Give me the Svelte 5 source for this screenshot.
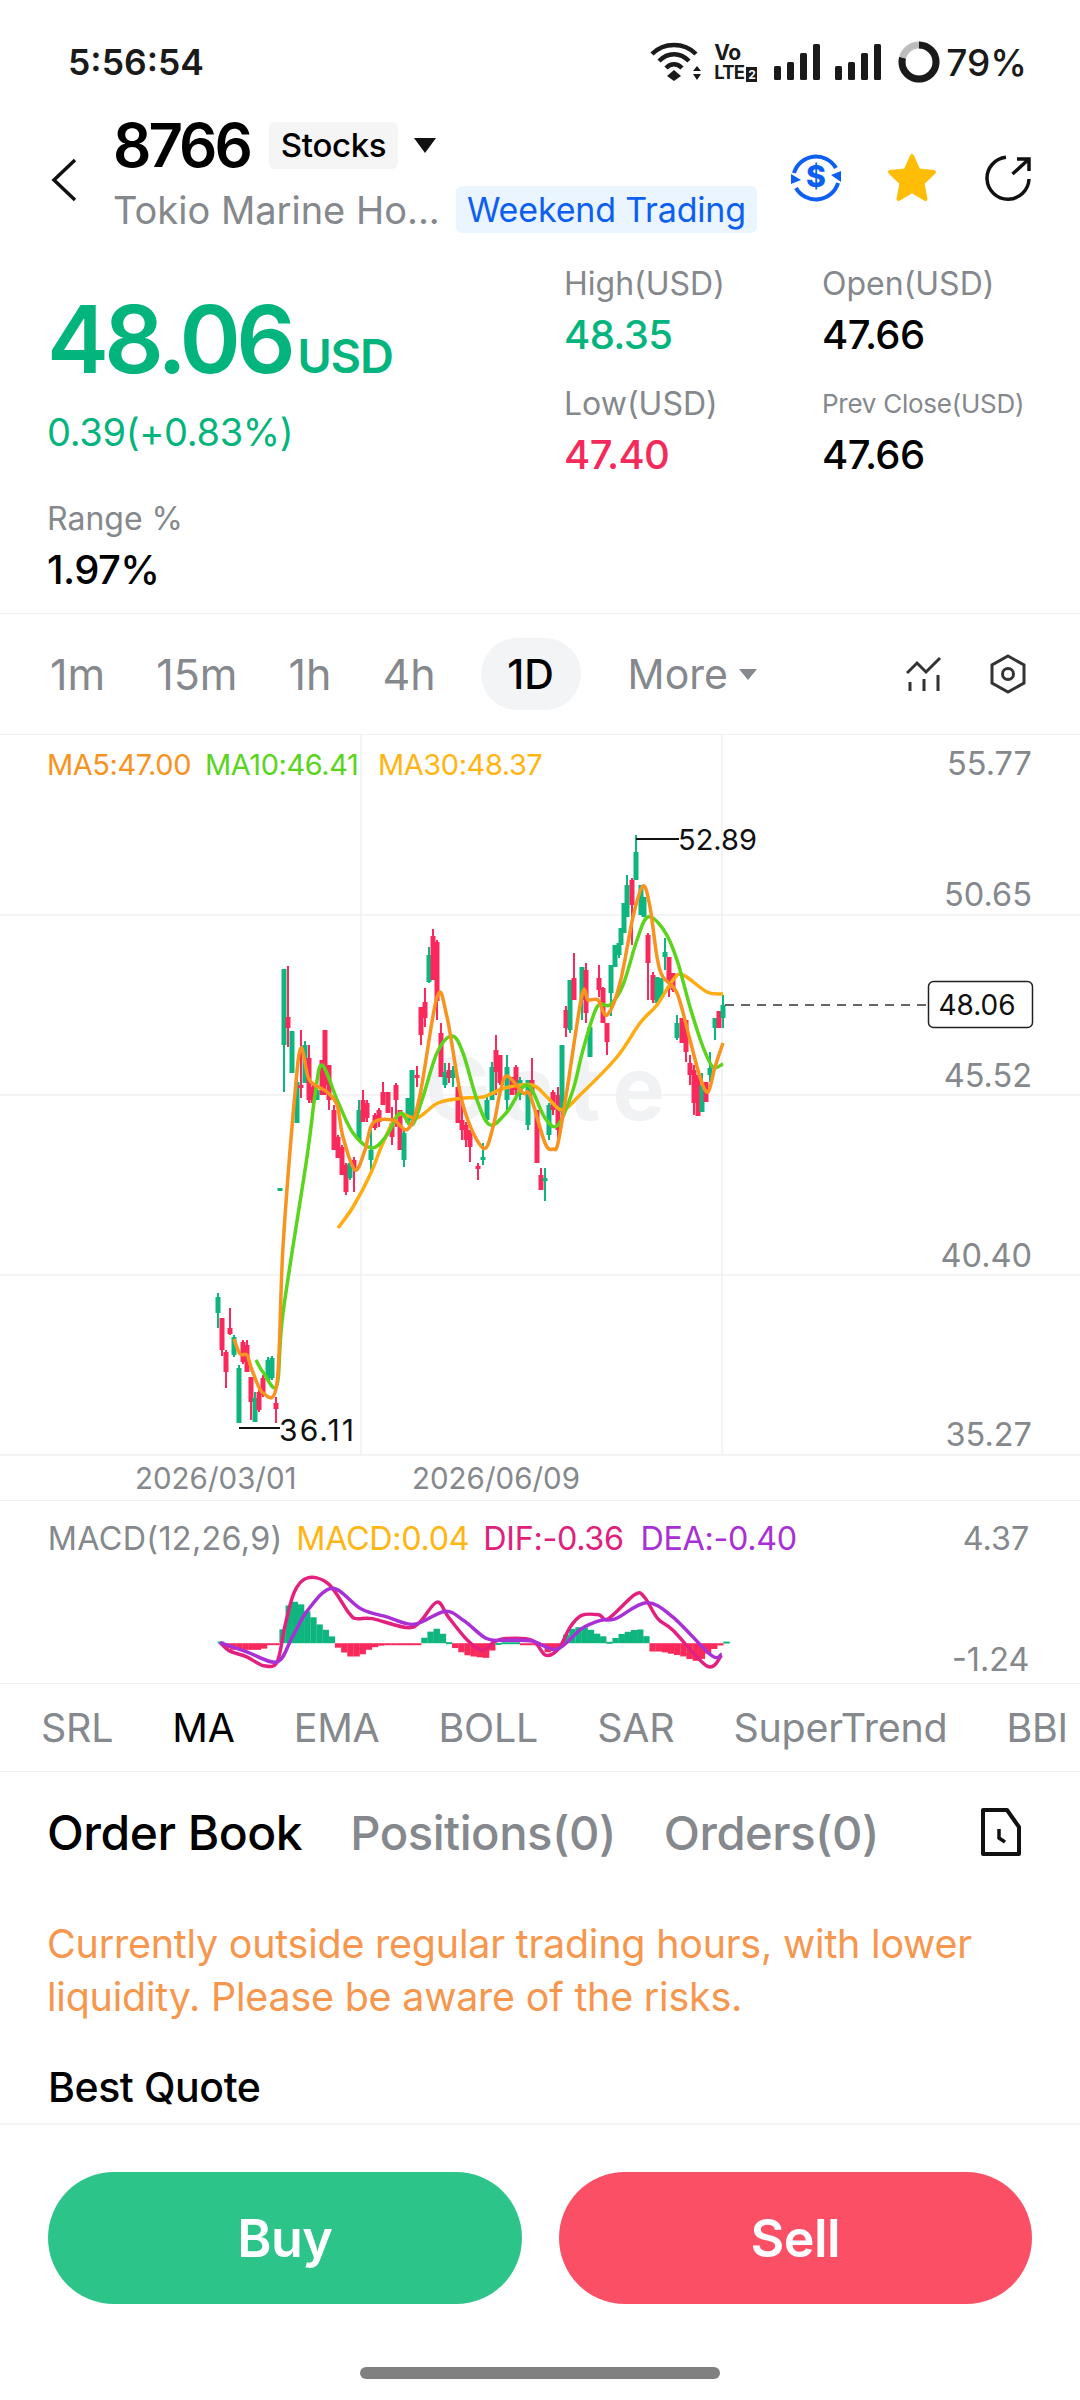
<script>
  const g = '#0fb57f';
  const r = '#f92a5b';
  // x, wick top, wick bottom, body top, body bottom, colour
  const candles = [
    [218,1293,1328,1297,1313,g],[222,1318,1356,1318,1350,r],[226,1350,1388,1352,1372,r],[230,1308,1335,1328,1334,r],
    [234,1335,1357,1337,1355,g],[239,1365,1423,1368,1423,g],[243,1340,1364,1342,1362,r],[247,1340,1372,1345,1372,r],
    [251,1377,1420,1377,1402,r],[255,1392,1422,1398,1422,g],[259,1390,1412,1392,1410,r],[263,1375,1397,1378,1395,r],
    [268,1357,1382,1360,1380,g],[272,1356,1380,1358,1378,g],[276,1397,1423,1403,1409,r],[280,1188,1191,1188,1191,g],
    [284,969,1092,969,1045,g],[288,966,1047,1017,1028,r],[292,1031,1073,1031,1073,g],[297,1077,1123,1082,1123,g],
    [301,1030,1098,1085,1088,r],[305,1041,1083,1045,1083,g],[309,1045,1103,1058,1100,r],[313,1082,1103,1087,1103,r],
    [317,1086,1100,1090,1100,g],[322,1060,1095,1060,1095,r],[325,1030,1095,1030,1085,r],[329,1065,1110,1065,1100,r],
    [334,1105,1150,1110,1150,r],[338,1135,1158,1137,1158,r],[342,1145,1175,1147,1175,r],[346,1163,1195,1165,1192,r],
    [350,1160,1180,1163,1178,g],[354,1157,1192,1160,1168,r],[359,1100,1140,1110,1140,g],[363,1090,1122,1100,1122,r],
    [367,1100,1122,1103,1118,r],[371,1130,1170,1150,1160,g],[375,1113,1130,1115,1128,r],[379,1108,1127,1110,1122,r],
    [383,1082,1105,1092,1105,r],[388,1092,1113,1092,1113,r],[392,1107,1145,1123,1137,r],[396,1083,1127,1085,1100,r],
    [400,1110,1150,1110,1150,r],[404,1130,1167,1133,1160,g],[408,1098,1125,1098,1123,g],[412,1070,1125,1070,1120,g],
    [417,1066,1087,1075,1078,r],[421,1007,1045,1007,1035,r],[425,988,1027,1002,1018,r],[429,947,983,955,982,g],
    [433,929,980,936,980,r],[437,940,1020,942,1001,r],[441,1023,1077,1033,1077,r],[445,1063,1088,1072,1085,g],
    [449,1063,1083,1070,1078,r],[453,1066,1087,1070,1078,g],[458,1085,1123,1087,1123,r],[462,1100,1140,1120,1130,r],
    [466,1122,1147,1125,1140,r],[470,1130,1162,1130,1147,r],[478,1163,1180,1166,1169,r],[483,1143,1165,1157,1160,g],
    [487,1095,1123,1100,1120,g],[492,1062,1100,1067,1100,g],[496,1035,1095,1050,1072,r],[500,1055,1085,1055,1083,r],
    [507,1055,1110,1067,1100,g],[512,1077,1095,1077,1095,r],[516,1065,1100,1067,1090,r],[520,1077,1100,1080,1095,g],
    [528,1080,1130,1080,1125,g],[532,1058,1095,1080,1092,r],[537,1110,1163,1110,1163,r],[541,1168,1190,1175,1190,r],
    [545,1168,1201,1178,1181,g],[549,1103,1140,1105,1135,g],[553,1090,1115,1092,1110,r],[558,1087,1140,1095,1130,r],
    [562,1045,1115,1045,1112,g],[566,1006,1037,1010,1028,r],[570,980,1033,980,1030,g],[574,953,1000,978,1000,r],
    [582,967,1020,967,1000,g],[586,963,1023,970,1013,r],[590,1023,1057,1027,1057,g],[599,965,997,978,990,r],
    [603,987,1023,988,1023,r],[607,1023,1055,1023,1042,r],[611,965,1016,965,993,g],[615,945,967,945,967,g],
    [619,943,958,943,955,g],[621,928,945,928,945,g],[624,903,933,903,933,g],[627,875,917,885,917,g],
    [632,878,945,880,905,r],[636,835,880,852,880,g],[641,885,915,885,915,g],[644,897,917,897,917,g],
    [648,933,1000,935,963,r],[653,972,1003,975,1000,r],[657,977,1003,977,1003,g],[661,978,1000,978,998,g],
    [665,938,970,952,957,g],[669,957,997,957,983,r],[673,973,992,973,990,r],[677,1015,1040,1023,1038,g],
    [682,1018,1043,1018,1043,r],[686,1020,1062,1020,1052,r],[690,1055,1085,1063,1075,r],[694,1065,1115,1070,1103,r],
    [698,1075,1116,1075,1116,r],[702,1073,1112,1085,1112,g],[706,1082,1102,1082,1102,r],[710,1052,1082,1068,1075,g],
    [715,1018,1040,1018,1028,g],[719,1011,1028,1011,1028,r],[723,995,1028,1005,1018,g]
  ];

  const ma5 = [[234,1339],[240,1354],[247,1355],[252,1370],[263,1393],[277,1383],[283,1247],[295,1093],[301,1048],[308,1077],[315,1085],[327,1092],[337,1105],[343,1137],[355,1170],[365,1150],[373,1123],[393,1120],[408,1129],[420,1095],[437,997],[447,1017],[463,1105],[483,1148],[493,1127],[500,1093],[507,1076],[523,1093],[530,1095],[545,1143],[553,1149],[558,1143],[567,1090],[582,995],[588,1000],[598,1000],[607,1015],[620,983],[633,917],[643,886],[650,907],[657,957],[663,977],[677,993],[690,1040],[700,1077],[708,1092],[715,1067],[723,1043]];
  const ma10 = [[256,1360],[263,1372],[277,1385],[283,1313],[307,1157],[315,1095],[322,1065],[338,1102],[353,1133],[372,1148],[387,1135],[400,1113],[412,1125],[422,1100],[437,1053],[452,1036],[463,1053],[477,1100],[490,1125],[507,1112],[527,1085],[545,1118],[558,1125],[573,1090],[583,1050],[597,1007],[610,1005],[623,985],[637,940],[648,917],[665,932],[677,960],[690,1007],[703,1047],[713,1067],[723,1064]];
  const ma30 = [[338,1228],[353,1207],[370,1175],[383,1143],[398,1115],[417,1118],[438,1103],[463,1098],[483,1097],[505,1088],[532,1085],[547,1097],[562,1110],[580,1095],[617,1057],[640,1023],[657,1005],[673,980],[683,975],[707,992],[723,994]];

  // zoomed MACD points, mapped to page pixels below
  const mx = (p) => [180 + p[0] / 2.613, 1480 + p[1] / 3];
  const dif = [[100,487],[125,512],[170,530],[215,557],[250,545],[270,440],[295,335],[330,292],[385,310],[440,400],[460,415],[500,415],[590,442],[625,425],[670,365],[700,410],[750,480],[790,510],[820,485],[850,475],[920,480],[955,525],[990,505],[1020,440],[1050,405],[1095,403],[1120,415],[1190,342],[1215,350],[1250,415],[1290,450],[1380,558],[1418,525]].map(mx);
  const dea = [[100,487],[170,515],[250,545],[290,470],[330,390],[395,323],[470,385],[540,410],[610,432],[690,393],[740,420],[800,475],[850,480],[920,482],[985,507],[1050,445],[1100,420],[1140,415],[1220,367],[1290,410],[1390,525],[1418,522]].map(mx);

  // histogram outline: zoomed x, height (up is green, down is red)
  const env = [[95,3],[100,-8],[120,-20],[205,-20],[215,-5],[250,-5],[255,35],[265,100],[278,125],[300,125],[315,100],[330,90],[345,65],[360,50],[375,35],[392,12],[398,-10],[415,-25],[430,-40],[460,-40],[475,-25],[490,-15],[505,-10],[525,-5],[612,-5],[620,5],[635,25],[650,40],[665,45],[680,25],[692,5],[700,-5],[715,-20],[730,-30],[745,-38],[790,-45],[805,-25],[818,-5],[825,3],[885,3],[890,-5],[930,-5],[940,-12],[955,-30],[975,-20],[990,-8],[995,10],[1005,35],[1020,45],[1040,50],[1060,45],[1080,30],[1100,20],[1112,4],[1120,5],[1135,20],[1150,30],[1180,40],[1195,42],[1205,35],[1220,5],[1226,-25],[1250,-25],[1270,-30],[1290,-35],[1310,-40],[1330,-50],[1350,-55],[1365,-40],[1380,-25],[1400,-10],[1412,-4],[1418,5],[1425,5]];

  function height(zx) {
    for (let i = 1; i < env.length; i++) {
      if (zx <= env[i][0]) {
        const [x0, h0] = env[i - 1];
        const [x1, h1] = env[i];
        return h0 + ((h1 - h0) * (zx - x0)) / (x1 - x0);
      }
    }
    return 0;
  }

  const bars = [];
  for (let x = 216; x < 725; x += 6.2) {
    const h = height((x - 180) * 2.613) / 3;
    bars.push({ x, h });
  }

  function smooth(pts) {
    let d = `M${pts[0][0]} ${pts[0][1]}`;
    for (let i = 0; i < pts.length - 1; i++) {
      const p0 = pts[i - 1] || pts[i];
      const p1 = pts[i];
      const p2 = pts[i + 1];
      const p3 = pts[i + 2] || p2;
      const c1x = p1[0] + (p2[0] - p0[0]) / 6;
      const c1y = p1[1] + (p2[1] - p0[1]) / 6;
      const c2x = p2[0] - (p3[0] - p1[0]) / 6;
      const c2y = p2[1] - (p3[1] - p1[1]) / 6;
      d += `C${c1x.toFixed(1)} ${c1y.toFixed(1)} ${c2x.toFixed(1)} ${c2y.toFixed(1)} ${p2[0].toFixed(1)} ${p2[1].toFixed(1)}`;
    }
    return d;
  }

  const tabs = ['1m', '15m', '1h', '4h', '1D'];
  const indicators = ['SRL', 'MA', 'EMA', 'BOLL', 'SAR', 'SuperTrend', 'BBI'];
  const axis = [['55.77', 764], ['50.65', 895], ['45.52', 1076], ['40.40', 1256], ['35.27', 1435]];
</script>

<div class="page">
  <div class="status">
    <span class="time">5:56:54</span>
    <div class="sys">
      <svg class="wifi" width="52" height="42" viewBox="0 0 52 42">
        <path d="M2 13C14 1 34 1 46 13M9 20C18 11 30 11 39 20M16 27C21 22 27 22 32 27" fill="none" stroke="#1a1a1a" stroke-width="4.5" />
        <path d="M24 29L31 35L24 40L17 35Z" fill="#1a1a1a" />
        <path d="M47 25L51 30H43ZM47 39L51 33H43Z" fill="#1a1a1a" />
      </svg>
      <div class="volte">
        <span class="vo">Vo</span>
        <span class="lte">LTE<i>2</i></span>
      </div>
      <svg class="sig" width="46" height="36" viewBox="0 0 46 36">
        <rect x="0" y="22" width="7" height="14" rx="1.5" /><rect x="13" y="18" width="7" height="18" rx="1.5" /><rect x="26" y="9" width="7" height="27" rx="1.5" /><rect x="39" y="0" width="7" height="36" rx="1.5" />
      </svg>
      <svg class="sig two" width="46" height="36" viewBox="0 0 46 36">
        <rect x="0" y="22" width="7" height="14" rx="1.5" /><rect x="13" y="18" width="7" height="18" rx="1.5" /><rect x="26" y="9" width="7" height="27" rx="1.5" /><rect x="39" y="0" width="7" height="36" rx="1.5" />
      </svg>
      <svg class="ring" width="42" height="42" viewBox="0 0 42 42">
        <circle cx="21" cy="21" r="17" fill="none" stroke="#bdbdbd" stroke-width="7" />
        <circle cx="21" cy="21" r="17" fill="none" stroke="#1a1a1a" stroke-width="7" pathLength="100" stroke-dasharray="79 21" transform="rotate(-90 21 21)" />
      </svg>
      <span class="batt">79%</span>
    </div>
  </div>

  <div class="head">
    <svg class="back" width="28" height="44" viewBox="0 0 28 44">
      <path d="M25 2L4 22L25 42" fill="none" stroke="#111" stroke-width="3.5" />
    </svg>
    <div class="title">
      <div class="title-row">
        <span class="code">8766</span>
        <span class="type">Stocks</span>
        <span class="caret"></span>
      </div>
      <div class="sub-row">
        <span class="name">Tokio Marine Ho...</span>
        <span class="tag">Weekend Trading</span>
      </div>
    </div>
    <div class="head-icons">
      <svg width="60" height="60" viewBox="0 0 60 60">
        <path d="M8 25A23 23 0 0 1 50 20M52 35A23 23 0 0 1 10 40" fill="none" stroke="#0d5ff2" stroke-width="4" />
        <path d="M45 27L55 23V34ZM5 36V26L15 32Z" fill="#0d5ff2" />
        <text class="dollar" x="30" y="39" text-anchor="middle">$</text>
      </svg>
      <svg width="60" height="60" viewBox="0 0 60 60">
        <path d="M30 8L36.500 22.500L52 24L40.500 35L43.500 51L30 43L16.500 51L19.500 35L8 24L23.500 22.500Z" fill="#ffbd05" stroke="#ffbd05" stroke-width="4" stroke-linejoin="round" />
      </svg>
      <svg width="60" height="60" viewBox="0 0 60 60">
        <path d="M28 9.300A21 21 0 1 0 51 31" fill="none" stroke="#111" stroke-width="3.500" />
        <path d="M34.500 26L51 11M39 11H51V23" fill="none" stroke="#111" stroke-width="3.500" />
      </svg>
    </div>
  </div>

  <div class="quote">
    <div class="left">
      <div class="price"><span class="big">48.06</span><span class="cur">USD</span></div>
      <div class="change">0.39(+0.83%)</div>
      <div class="label range">Range %</div>
      <div class="value">1.97%</div>
    </div>
    <div class="stats">
      <div class="cell">
        <div class="label">High(USD)</div>
        <div class="value up">48.35</div>
      </div>
      <div class="cell">
        <div class="label">Open(USD)</div>
        <div class="value">47.66</div>
      </div>
      <div class="cell low">
        <div class="label">Low(USD)</div>
        <div class="value down">47.40</div>
      </div>
      <div class="cell low">
        <div class="label small">Prev Close(USD)</div>
        <div class="value">47.66</div>
      </div>
    </div>
  </div>

  <div class="periods">
    {#each tabs as t}
      <span class="period" class:on={t === '1D'}>{t}</span>
    {/each}
    <span class="period more">More<i class="mini"></i></span>
    <div class="tools">
      <svg width="36" height="36" viewBox="0 0 36 36">
        <path d="M1 17L11 7L20 16L34 2M4 26V35M18 23V35M32 19V35" fill="none" stroke="#333" stroke-width="3" />
      </svg>
      <svg width="40" height="42" viewBox="0 0 40 42">
        <path d="M20 3L36 12V30L20 39L4 30V12Z" fill="none" stroke="#333" stroke-width="3" />
        <circle cx="20" cy="21" r="5.500" fill="none" stroke="#333" stroke-width="3" />
      </svg>
    </div>
  </div>

  <svg class="chart" width="1080" height="765" viewBox="0 735 1080 765">
    <text class="mark" x="425" y="1120">Gate</text>
    {#each [915, 1095, 1275] as y}
      <line x1="0" x2="1080" y1={y} y2={y} class="grid" />
    {/each}
    <line x1="0" x2="1080" y1="1455" y2="1455" class="grid" />
    <line x1="361" x2="361" y1="735" y2="1455" class="grid" />
    <line x1="722" x2="722" y1="735" y2="1455" class="grid" />

    <text class="leg" x="47" y="775" fill="#f7931e">MA5:47.00</text>
    <text class="leg" x="205" y="775" fill="#5ad41c">MA10:46.41</text>
    <text class="leg" x="378" y="775" fill="#ffb512">MA30:48.37</text>

    {#each axis as [v, y]}
      <text class="ax" x="1032" y={y + 11} text-anchor="end">{v}</text>
    {/each}

    {#each candles as [x, t, b, bt, bb, col]}
      <rect x={x - 1} y={t} width="2" height={b - t} fill={col} />
      <rect x={x - 2.500} y={bt} width="5" height={bb - bt} fill={col} />
    {/each}

    <path d={smooth(ma30)} class="ma" stroke="#ffab12" />
    <path d={smooth(ma10)} class="ma" stroke="#5ad41c" />
    <path d={smooth(ma5)} class="ma" stroke="#f7931e" />

    <line x1="636" x2="679" y1="839" y2="839" stroke="#111" stroke-width="2" />
    <text class="ext" x="678" y="850">52.89</text>
    <line x1="239" x2="280" y1="1428" y2="1428" stroke="#111" stroke-width="2" />
    <text class="ext wide" x="279" y="1441">36.11</text>

    <line x1="725" x2="928" y1="1005" y2="1005" stroke="#333" stroke-width="1.500" stroke-dasharray="9 7" />
    <rect x="928.500" y="981.500" width="104" height="46" rx="5" fill="#fff" stroke="#222" stroke-width="1.500" />
    <text class="now" x="977" y="1015" text-anchor="middle">48.06</text>

    <text class="date" x="135" y="1489">2026/03/01</text>
    <text class="date" x="412" y="1489">2026/06/09</text>
  </svg>

  <svg class="macd" width="1080" height="183" viewBox="0 1500 1080 183">
    <text class="leg2 first" x="45" y="1549" fill="#85888c">MACD(12,26,9)</text>
    <text class="leg2" x="295" y="1549" fill="#ffb512">MACD:0.04</text>
    <text class="leg2" x="483" y="1549" fill="#e0217c">DIF:-0.36</text>
    <text class="leg2" x="641" y="1549" fill="#a92fd6">DEA:-0.40</text>
    <text class="ax" x="1032" y="1549" text-anchor="end">4.37</text>
    <text class="ax" x="1032" y="1671" text-anchor="end">-1.24</text>
    {#each bars as b}
      <rect x={b.x} y={b.h > 0 ? 1643 - b.h : 1643} width="6.400" height={Math.max(Math.abs(b.h), 2)} fill={b.h > 0 ? g : r} />
    {/each}
    <path d={smooth(dif)} class="ml" stroke="#e4207f" />
    <path d={smooth(dea)} class="ml" stroke="#a92fd6" />
  </svg>

  <div class="inds">
    {#each indicators as t}
      <span class="ind" class:on={t === 'MA'}>{t}</span>
    {/each}
  </div>

  <div class="book-tabs">
    <span class="book on">Order Book</span>
    <span class="book">Positions(0)</span>
    <span class="book">Orders(0)</span>
    <svg class="doc" width="42" height="50" viewBox="0 0 42 50">
      <path d="M3 3H27L39 20V47H3Z" fill="none" stroke="#111" stroke-width="4" stroke-linejoin="round" />
      <path d="M19 22V31L25 35" fill="none" stroke="#111" stroke-width="3.500" />
    </svg>
  </div>

  <p class="warn">Currently outside regular trading hours, with lower liquidity. Please be aware of the risks.</p>

  <div class="best">Best Quote</div>

  <div class="actions">
    <button class="buy">Buy</button>
    <button class="sell">Sell</button>
  </div>

  <div class="home"><span></span></div>
</div>

<style>
  :global(body) {
    margin: 0;
    background: #fff;
  }

  .page {
    width: 1080px;
    height: 2400px;
    overflow: hidden;
    font-family: Inter, "Liberation Sans", sans-serif;
    color: #000;
    letter-spacing: -0.02em;
  }

  .status {
    height: 100px;
    box-sizing: border-box;
    padding: 24px 53px 0 68px;
    display: flex;
    align-items: center;
    justify-content: space-between;
  }

  .time {
    font-size: 35.500px;
    font-weight: 600;
    color: #1a1a1a;
    letter-spacing: 0;
  }

  .sys {
    display: flex;
    align-items: center;
    color: #1a1a1a;
  }

  .wifi {
    margin-right: 12px;
  }

  .volte {
    display: flex;
    flex-direction: column;
    font-weight: 700;
    margin-right: 14px;
    line-height: 1;
    width: 46px;
  }

  .vo {
    font-size: 21px;
  }

  .lte {
    font-size: 18.500px;
    letter-spacing: -0.04em;
    white-space: nowrap;
  }

  .lte i {
    font-style: normal;
    font-size: 12px;
    background: #1a1a1a;
    color: #fff;
    margin-left: 2px;
    padding: 0 2px;
  }

  .sig rect {
    fill: #1a1a1a;
  }

  .sig.two {
    margin-left: 15px;
    margin-right: 17px;
  }

  .ring {
    margin-right: 6px;
  }

  .batt {
    font-size: 37px;
    font-weight: 500;
    letter-spacing: 0;
  }

  .head {
    height: 140px;
    display: flex;
    position: relative;
    padding-left: 50px;
  }

  .back {
    margin-top: 58px;
  }

  .title {
    margin-left: 35px;
  }

  .title-row {
    height: 90px;
    display: flex;
    align-items: center;
  }

  .code {
    font-size: 60px;
    font-weight: 600;
    letter-spacing: -0.05em;
  }

  .type {
    margin-left: 19px;
    background: #f5f5f5;
    border-radius: 6px;
    font-size: 33px;
    font-weight: 500;
    height: 47px;
    line-height: 47px;
    padding: 0 12px;
  }

  .caret {
    margin-left: 16px;
    width: 0;
    height: 0;
    border-left: 11px solid transparent;
    border-right: 11px solid transparent;
    border-top: 15px solid #111;
  }

  .sub-row {
    display: flex;
    align-items: center;
    margin-top: -4px;
  }

  .name {
    font-size: 38px;
    color: #85888c;
    width: 343px;
    white-space: nowrap;
    letter-spacing: 0;
  }

  .tag {
    background: #ebf5ff;
    color: #0d5ff2;
    font-size: 34px;
    height: 47px;
    line-height: 47px;
    border-radius: 6px;
    padding: 0 11px;
    white-space: nowrap;
    letter-spacing: -0.005em;
  }

  .head-icons {
    margin-left: auto;
    padding: 48px 42px 0 0;
    display: flex;
    gap: 36px;
    align-items: flex-start;
  }

  .dollar {
    font-size: 30px;
    font-weight: 800;
    fill: #0d5ff2;
    letter-spacing: 0;
  }

  .quote {
    height: 373px;
    box-sizing: border-box;
    padding-left: 47px;
    display: flex;
  }

  .left {
    width: 517px;
    padding-top: 49px;
  }

  .price {
    height: 100px;
    line-height: 100px;
    white-space: nowrap;
  }

  .big {
    font-size: 93px;
    font-weight: 600;
    color: #03b47d;
    letter-spacing: -0.05em;
  }

  .cur {
    font-size: 47px;
    font-weight: 600;
    color: #03b47d;
    margin-left: 6px;
    letter-spacing: -0.025em;
  }

  .change {
    margin-top: 18px;
    height: 50px;
    line-height: 50px;
    font-size: 38px;
    color: #03b47d;
  }

  .label {
    height: 40px;
    line-height: 40px;
    font-size: 32px;
    color: #85888c;
    white-space: nowrap;
    letter-spacing: 0;
  }

  .label.range {
    margin-top: 42px;
  }

  .label.small {
    font-size: 26px;
    letter-spacing: -0.01em;
  }

  .value {
    margin-top: 6px;
    height: 50px;
    line-height: 50px;
    font-size: 40px;
    font-weight: 500;
    letter-spacing: -0.015em;
  }

  .value.up {
    color: #03b47d;
  }

  .value.down {
    color: #f5295a;
  }

  .stats {
    display: grid;
    grid-template-columns: 258px 1fr;
    align-content: start;
    padding-top: 24px;
  }

  .cell.low {
    margin-top: 24px;
  }

  .periods {
    height: 122px;
    box-sizing: border-box;
    border-top: 1px solid #f0f1f3;
    border-bottom: 1px solid #f0f1f3;
    padding-left: 50px;
    display: flex;
    align-items: center;
    gap: 51px;
  }

  .period {
    font-size: 43px;
    color: #85888c;
    letter-spacing: 0;
    white-space: nowrap;
  }

  .period.on {
    color: #000;
    background: #f3f4f6;
    border-radius: 36px;
    width: 100px;
    height: 72px;
    line-height: 72px;
    text-align: center;
    font-size: 41px;
    font-weight: 500;
    margin-left: -6px;
  }

  .more {
    display: flex;
    align-items: center;
    gap: 11px;
    font-size: 41px;
    margin-left: -4px;
  }

  .mini {
    width: 0;
    height: 0;
    border-left: 9px solid transparent;
    border-right: 9px solid transparent;
    border-top: 11px solid #85888c;
  }

  .tools {
    margin-left: auto;
    display: flex;
    align-items: center;
    gap: 46px;
    padding-right: 52px;
  }

  .chart,
  .macd {
    display: block;
  }

  .grid {
    stroke: #f0f1f3;
    stroke-width: 1.500;
  }

  .mark {
    font-size: 88px;
    font-weight: 700;
    fill: #f1f2f4;
    letter-spacing: 13px;
  }

  .leg {
    font-size: 29px;
    letter-spacing: -0.015em;
  }

  .leg2 {
    font-size: 32.500px;
    letter-spacing: -0.01em;
  }

  .leg2.first {
    letter-spacing: 0.01em;
  }

  .ax {
    font-size: 32.500px;
    fill: #85888c;
    letter-spacing: 0;
  }

  .ma {
    fill: none;
    stroke-width: 3.500;
    stroke-linejoin: round;
  }

  .ml {
    fill: none;
    stroke-width: 3.500;
    stroke-linejoin: round;
  }

  .ext {
    font-size: 29px;
    fill: #111;
    letter-spacing: 0;
  }

  .ext.wide {
    font-size: 30px;
    letter-spacing: 0.07em;
  }

  .now {
    font-size: 28px;
    fill: #111;
    letter-spacing: 0;
  }

  .date {
    font-size: 29.500px;
    fill: #85888c;
    letter-spacing: 0;
  }

  .macd {
    border-top: 1.500px solid #f0f1f3;
    box-sizing: border-box;
  }

  .inds {
    height: 89px;
    box-sizing: border-box;
    border-top: 1px solid #f0f1f3;
    border-bottom: 1px solid #f0f1f3;
    padding-left: 41px;
    display: flex;
    align-items: center;
    gap: 59px;
    white-space: nowrap;
    overflow: hidden;
  }

  .ind {
    font-size: 39.400px;
    color: #85888c;
    letter-spacing: -0.005em;
  }

  .ind.on {
    color: #000;
  }

  .book-tabs {
    height: 120px;
    padding: 0 58px 0 47px;
    display: flex;
    align-items: center;
    gap: 48px;
  }

  .book {
    font-size: 47.200px;
    font-weight: 500;
    color: #85888c;
    white-space: nowrap;
    letter-spacing: -0.01em;
  }

  .book.on {
    color: #000;
    font-size: 48px;
  }

  .doc {
    margin-left: auto;
  }

  .warn {
    margin: 26px 47px 0;
    font-size: 39.400px;
    line-height: 53px;
    color: #f7964d;
    letter-spacing: -0.005em;
  }

  .best {
    margin: 36px 48px 0;
    height: 54px;
    line-height: 54px;
    font-size: 41px;
    font-weight: 500;
    letter-spacing: -0.01em;
  }

  .actions {
    margin-top: 9px;
    border-top: 2px solid #f3f4f6;
    padding: 47px 48px 0;
    display: flex;
    gap: 37px;
  }

  button {
    flex: 1;
    height: 132px;
    border: 0;
    border-radius: 66px;
    color: #fff;
    font-family: inherit;
    font-size: 52px;
    font-weight: 600;
    letter-spacing: -0.01em;
  }

  .buy {
    background: #2dc48a;
  }

  .sell {
    background: #fa4f65;
  }

  .home {
    display: flex;
    justify-content: center;
    margin-top: 63px;
  }

  .home span {
    width: 360px;
    height: 12px;
    border-radius: 6px;
    background: #808080;
  }
</style>
